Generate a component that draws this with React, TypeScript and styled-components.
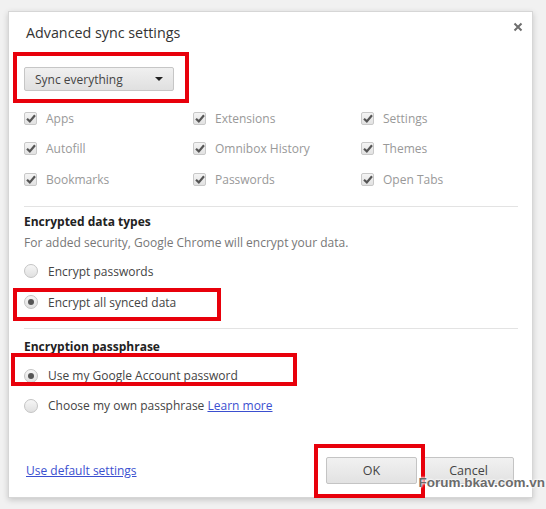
import React, { FC } from 'react'
import styled, { createGlobalStyle } from 'styled-components'

const GlobalStyle = createGlobalStyle`
  html, body {
    margin: 0;
    padding: 0;
    background: #f1f1f1;
  }
  body {
    font-family: "Open Sans", "Noto Sans", sans-serif;
  }
`

const Page = styled.div`
  width: 546px;
  height: 509px;
  box-sizing: border-box;
  padding: 11px 13px 11px 8px;
  position: relative;
  overflow: hidden;
`

const Dialog = styled.div`
  position: relative;
  height: 487px;
  box-sizing: border-box;
  background: #fff;
  border: 1px solid #d6d6d6;
  box-shadow: 0 2px 6px rgba(0, 0, 0, 0.18);
  padding: 0 14px 13px 15px;
  display: flex;
  flex-direction: column;
  color: #333;
  font-size: 12px;
`

const Close = styled.button`
  position: absolute;
  top: 10px;
  right: 9px;
  width: 10px;
  height: 10px;
  padding: 0;
  border: 0;
  background: transparent;
  display: flex;
`

const Title = styled.h1`
  margin: 10px 0 0 2px;
  font-size: 14.3px;
  line-height: 22px;
  font-weight: 400;
  color: #333;
`

const Select = styled.div`
  width: 150px;
  height: 24px;
  box-sizing: border-box;
  border: 1px solid #c6c6c6;
  border-radius: 2px;
  background: linear-gradient(#f0f0f0, #e0e0e0);
  display: flex;
  align-items: center;
  justify-content: space-between;
  padding: 0 10px 0 10px;
  color: #444;
  font-size: 12px;
`

const Caret = styled.span`
  width: 0;
  height: 0;
  border-left: 4px solid transparent;
  border-right: 4px solid transparent;
  border-top: 4px solid #222;
`

const TypeGrid = styled.div`
  margin-top: 12px;
  display: grid;
  grid-template-columns: 169px 168px 1fr;
  grid-auto-rows: 30.5px;
`

const CheckRow = styled.label`
  display: flex;
  align-items: center;
  gap: 9px;
  color: #999;
`

const Box = styled.span`
  width: 13px;
  height: 13px;
  box-sizing: border-box;
  border: 1px solid #c8c8c8;
  border-radius: 2px;
  background: linear-gradient(#f4f4f4, #e2e2e2);
  display: flex;
  align-items: center;
  justify-content: center;
`

const Divider = styled.hr<{ $top: number }>`
  margin: ${(p) => p.$top}px 0 0 0;
  border: 0;
  border-top: 1px solid #e3e3e3;
`

const Heading = styled.h2<{ $top: number }>`
  margin: ${(p) => p.$top}px 0 0 0;
  font-size: 12px;
  line-height: 18px;
  font-weight: 700;
  color: #222;
`

const Note = styled.p`
  margin: 3px 0 0 0;
  line-height: 18px;
  color: #777;
`

const RadioList = styled.div<{ $top: number; $row: number }>`
  margin-top: ${(p) => p.$top}px;
  display: grid;
  justify-items: start;
  grid-auto-rows: ${(p) => p.$row}px;
`

const RadioRow = styled.label`
  display: flex;
  align-items: center;
  gap: 10px;
  color: #444;
`

const Circle = styled.span<{ $on?: boolean }>`
  width: 14px;
  height: 14px;
  box-sizing: border-box;
  border: 1px solid #c4c4c4;
  border-radius: 50%;
  background: linear-gradient(#f6f6f6, #e0e0e0);
  display: flex;
  align-items: center;
  justify-content: center;
  &::after {
    content: '';
    width: 6px;
    height: 6px;
    border-radius: 50%;
    background: #555;
    display: ${(p) => (p.$on ? 'block' : 'none')};
  }
`

const Link = styled.a`
  color: #3b4fd0;
  text-decoration: underline;
  cursor: pointer;
`

const Footer = styled.div`
  margin-top: auto;
  display: flex;
  align-items: center;
  padding: 0 4px 0 2px;
`

const FooterLink = styled(Link)`
  margin-right: auto;
`

const Button = styled.button`
  width: 91px;
  height: 27px;
  box-sizing: border-box;
  border: 1px solid #c4c4c4;
  border-radius: 2px;
  background: linear-gradient(#f1f1f1, #e2e2e2);
  color: #444;
  font-family: inherit;
  font-size: 12.5px;
  padding: 0;
  display: block;
`

const CancelButton = styled(Button)`
  margin-left: 6px;
`

// wrapper that carries a red annotation frame over its content
const Marked = styled.div<{ $top?: number }>`
  position: relative;
  display: flex;
  align-self: flex-start;
  margin-top: ${(p) => p.$top ?? 0}px;
`

const MarkedRow = styled.div`
  position: relative;
  display: flex;
`

const Frame = styled.span<{ $t: number; $l: number; $w: number; $h: number }>`
  position: absolute;
  top: ${(p) => -p.$t}px;
  left: ${(p) => -p.$l}px;
  width: ${(p) => p.$w}px;
  height: ${(p) => p.$h}px;
  box-sizing: border-box;
  border: 4px solid #e8000b;
  pointer-events: none;
`

const Watermark = styled.div`
  position: absolute;
  right: 1px;
  bottom: 19px;
  font-family: "Liberation Sans", Arial, sans-serif;
  font-weight: 700;
  font-size: 13.5px;
  color: #6b6b6b;
  text-shadow: 0 0 2px #fff, 0 0 2px #fff, 0 0 3px #fff;
`

const Check = () => (
  <svg width="10" height="9" viewBox="0 0 10 9">
    <path d="M1 4.8 L3.8 7.4 L9 1.2" fill="none" stroke="#555" strokeWidth="2.2" />
  </svg>
)

const types = ['Apps', 'Extensions', 'Settings', 'Autofill', 'Omnibox History', 'Themes', 'Bookmarks', 'Passwords', 'Open Tabs']

const App: FC = () => (
  <Page>
    <GlobalStyle />
    <Dialog>
      <Close aria-label="Close">
        <svg width="10" height="10" viewBox="0 0 10 10">
          <path d="M1.5 1.5 L8.5 8.5 M8.5 1.5 L1.5 8.5" stroke="#6e6e6e" strokeWidth="2" />
        </svg>
      </Close>
      <Title>Advanced sync settings</Title>

      <Marked $top={23}>
        <Select>
          Sync everything
          <Caret />
        </Select>
        <Frame $t={15} $l={11} $w={176} $h={51} />
      </Marked>

      <TypeGrid>
        {types.map((t) => (
          <CheckRow key={t}>
            <Box>
              <Check />
            </Box>
            {t}
          </CheckRow>
        ))}
      </TypeGrid>

      <Divider $top={11} />
      <Heading $top={6}>Encrypted data types</Heading>
      <Note>For added security, Google Chrome will encrypt your data.</Note>
      <RadioList $top={4} $row={31}>
        <RadioRow>
          <Circle />
          Encrypt passwords
        </RadioRow>
        <MarkedRow>
          <RadioRow>
            <Circle $on />
            Encrypt all synced data
          </RadioRow>
          <Frame $t={-1} $l={11} $w={208} $h={33} />
        </MarkedRow>
      </RadioList>

      <Divider $top={10} />
      <Heading $top={9}>Encryption passphrase</Heading>
      <RadioList $top={5} $row={30}>
        <MarkedRow>
          <RadioRow>
            <Circle $on />
            Use my Google Account password
          </RadioRow>
          <Frame $t={8} $l={13} $w={286} $h={33} />
        </MarkedRow>
        <RadioRow>
          <Circle />
          <span>
            Choose my own passphrase <Link>Learn more</Link>
          </span>
        </RadioRow>
      </RadioList>

      <Footer>
        <FooterLink>Use default settings</FooterLink>
        <Marked>
          <Button>OK</Button>
          <Frame $t={13} $l={12} $w={111} $h={54} />
        </Marked>
        <CancelButton>Cancel</CancelButton>
      </Footer>
    </Dialog>
    <Watermark>Forum.bkav.com.vn</Watermark>
  </Page>
)

export default App
